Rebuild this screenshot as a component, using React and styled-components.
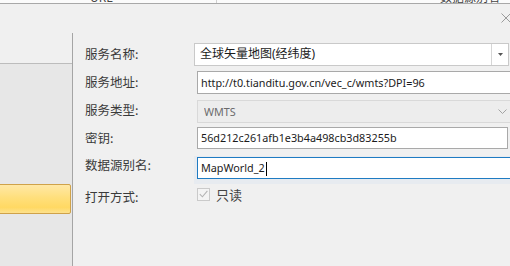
import styled, { createGlobalStyle } from 'styled-components';

const GlobalStyle = createGlobalStyle`
    html, body {
        margin: 0;
        padding: 0;
        background: #f0f0f0;
        overflow: hidden;
    }
    body {
        font-family: "Noto Sans", "Noto Sans CJK SC", sans-serif;
        color: #222;
    }
`

const Page = styled.div`
    width: 510px;
    height: 266px;
    display: flex;
    flex-direction: column;
    overflow: hidden;
`
const HeaderStrip = styled.div`
    height: 3px;
    flex: none;
    display: flex;
    background: #fbfbfb;
    border-bottom: 1px solid #a8a8a8;
    overflow: hidden;
`
const HeaderCell = styled.div`
    width: ${p => p.$w}px;
    flex: none;
    display: flex;
    align-items: flex-end;
    padding-left: ${p => p.$pad}px;
    box-sizing: border-box;
    border-right: ${p => p.$line ? '1px solid #d0d0d0' : 'none'};
    font-family: "Noto Sans CJK SC", sans-serif;
    font-size: 12px;
    line-height: 12px;
    color: #444;
`
const TitleBar = styled.div`
    height: 29px;
    flex: none;
    display: flex;
    justify-content: flex-end;
    align-items: flex-start;
`
const CloseButton = styled.div`
    width: 10px;
    height: 10px;
    margin-top: 9px;
    margin-right: -1px;
    display: flex;
`
const Body = styled.div`
    flex: 1;
    display: flex;
    min-height: 0;
`
const Sidebar = styled.div`
    width: 72px;
    flex: none;
    display: flex;
    flex-direction: column;
    border-right: 1px solid #a5a5a5;
`
const SidebarHead = styled.div`
    height: 30px;
    flex: none;
    border-bottom: 1px solid #bcbcbc;
`
const SidebarList = styled.div`
    flex: 1;
    background: #e7e7e7;
    padding-top: 120px;
`
const SelectedItem = styled.div`
    height: 30px;
    box-sizing: border-box;
    margin-left: -3px;
    margin-right: 1px;
    border: 1px solid #cfa24a;
    border-radius: 2px;
    background: linear-gradient(#ffe8a6 0%, #ffdf7c 45%, #ffd963 80%, #fde18e 100%);
`
const Form = styled.div`
    flex: 1;
    display: flex;
    flex-direction: column;
    padding: 10px 1px 0 12px;
`
const Row = styled.div`
    display: grid;
    grid-template-columns: 109px 1fr;
    grid-template-rows: ${p => p.$h}px;
    align-items: center;
    height: ${p => p.$h}px;
    margin-top: ${p => p.$gap}px;
    flex: none;
`
const Label = styled.div`
    font-family: "Noto Sans CJK SC", sans-serif;
    font-size: 12.5px;
    color: #3a3a3a;
    line-height: 1;
    margin-top: ${p => p.$down || 0}px;
    margin-bottom: ${p => p.$up || 0}px;
    white-space: nowrap;
`
const Field = styled.div`
    height: 100%;
    box-sizing: border-box;
    margin-left: ${p => p.$inset ?? 3}px;
    margin-right: ${p => p.$spill ? -8 : p.$right ?? 0}px;
    border: 1px solid ${p => p.$focus ? '#1f7bc2' : p.$disabled ? '#d9d9d9' : p.$soft ? '#c9c9c9' : '#a9a9a9'};
    background: ${p => p.$disabled ? '#ededed' : '#fff'};
    box-shadow: ${p => p.$focus ? '0 2px 0 3px rgba(214,226,240,0.35)' : 'none'};
    display: flex;
    align-items: center;
    padding-left: ${p => p.$pad ?? 3}px;
`
const FieldText = styled.span`
    flex: 1;
    font-size: ${p => p.$cjk ? 12 : 10.8}px;
    color: ${p => p.$muted ? '#6b6b6b' : '#1b1b1b'};
    white-space: nowrap;
    overflow: hidden;
    line-height: 1.4;
`
const Caret = styled.span`
    display: inline-block;
    width: 1px;
    height: 14px;
    background: #000;
    margin-left: 1px;
    vertical-align: middle;
`
const DropButton = styled.div`
    width: 16px;
    height: 100%;
    flex: none;
    border-left: 1px solid #d6d6d6;
    display: flex;
    align-items: center;
    justify-content: center;
`
const Chevron = styled.div`
    width: 16px;
    flex: none;
    margin-right: 6px;
    display: flex;
    justify-content: center;
`
const CheckLine = styled.div`
    display: flex;
    align-items: center;
    gap: 6px;
    margin-left: 3px;
`
const CheckBox = styled.div`
    width: 13px;
    height: 13px;
    box-sizing: border-box;
    border: 1px solid #cacaca;
    background: #f4f4f4;
    display: flex;
    align-items: center;
    justify-content: center;
`
const CheckLabel = styled.span`
    font-family: "Noto Sans CJK SC", sans-serif;
    font-size: 13px;
    color: #444;
    line-height: 1;
`

const App = () => {
    return (
        <Page>
            <GlobalStyle />
            <HeaderStrip>
                <HeaderCell $w={217} $pad={90} $line>URL</HeaderCell>
                <HeaderCell $w={293} $pad={223}>数据源别名</HeaderCell>
            </HeaderStrip>
            <TitleBar>
                <CloseButton>
                    <svg width="10" height="10" viewBox="0 0 10 10">
                        <path d="M0.5 0.5 L9.5 9.5 M9.5 0.5 L0.5 9.5" stroke="#9b9b9b" strokeWidth="1" />
                    </svg>
                </CloseButton>
            </TitleBar>
            <Body>
                <Sidebar>
                    <SidebarHead />
                    <SidebarList>
                        <SelectedItem />
                    </SidebarList>
                </Sidebar>
                <Form>
                    <Row $h={23} $gap={0}>
                        <Label>服务名称:</Label>
                        <Field $inset={0} $right={0} $soft $pad={5}>
                            <FieldText $cjk>全球矢量地图(经纬度)</FieldText>
                            <DropButton>
                                <svg width="5" height="3" viewBox="0 0 5 3">
                                    <path d="M0 0 L5 0 L2.5 3 Z" fill="#555" />
                                </svg>
                            </DropButton>
                        </Field>
                    </Row>
                    <Row $h={23} $gap={5}>
                        <Label>服务地址:</Label>
                        <Field $spill>
                            <FieldText>http://t0.tianditu.gov.cn/vec_c/wmts?DPI=96</FieldText>
                        </Field>
                    </Row>
                    <Row $h={23} $gap={6}>
                        <Label $up={2}>服务类型:</Label>
                        <Field $disabled $spill $pad={6}>
                            <FieldText $muted>WMTS</FieldText>
                            <Chevron>
                                <svg width="9" height="5" viewBox="0 0 9 5">
                                    <path d="M0.5 0.5 L4.5 4.5 L8.5 0.5" stroke="#a3a3a3" strokeWidth="1" fill="none" />
                                </svg>
                            </Chevron>
                        </Field>
                    </Row>
                    <Row $h={22} $gap={4}>
                        <Label>密钥:</Label>
                        <Field $right={1}>
                            <FieldText>56d212c261afb1e3b4a498cb3d83255b</FieldText>
                        </Field>
                    </Row>
                    <Row $h={22} $gap={8}>
                        <Label $up={6}>数据源别名:</Label>
                        <Field $focus $spill>
                            <FieldText>MapWorld_2<Caret /></FieldText>
                        </Field>
                    </Row>
                    <Row $h={14} $gap={8}>
                        <Label $down={7}>打开方式:</Label>
                        <CheckLine>
                            <CheckBox>
                                <svg width="9" height="8" viewBox="0 0 9 8">
                                    <path d="M0.8 4.2 L3.4 6.8 L8.4 0.8" stroke="#b4b4b4" strokeWidth="1.1" fill="none" />
                                </svg>
                            </CheckBox>
                            <CheckLabel>只读</CheckLabel>
                        </CheckLine>
                    </Row>
                </Form>
            </Body>
        </Page>
    )
}

export default App
